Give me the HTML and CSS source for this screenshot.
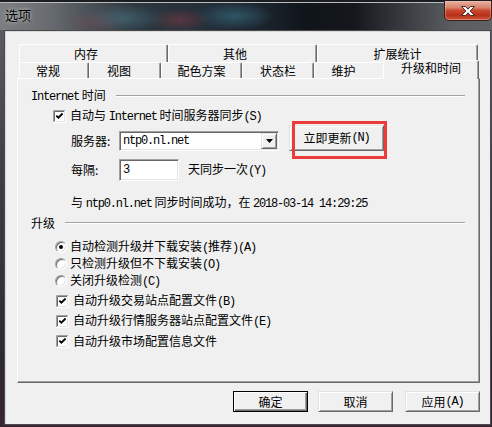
FILE: index.html
```html
<!DOCTYPE html>
<html lang="zh-CN">
<head>
<meta charset="utf-8">
<title>选项</title>
<link rel="stylesheet" href="styles.css">
</head>
<body>
<div class="window">
  <div class="titlebar">
    <span class="title">选项</span>
    <div class="close">
      <svg width="14" height="10" viewBox="0 0 14 10"><path d="M0.5 0.5H4.5L7 3.2L9.5 0.5H13.5L9.2 5L13.5 9.5H9.5L7 6.8L4.5 9.5H0.5L4.8 5Z" fill="#fff" stroke="#4a2a24" stroke-width="1"/></svg>
    </div>
  </div>
  <div class="client">
    <div class="tabs">
      <div class="tabrow row1">
        <div class="tab w149 off2">内存</div>
        <div class="tab w149 off2">其他</div>
        <div class="tab w161">扩展统计</div>
      </div>
      <div class="tabrow row2">
        <div class="tab w70 off">常规</div>
        <div class="tab w72 off">视图</div>
        <div class="tab w81">配色方案</div>
        <div class="tab w72">状态栏</div>
        <div class="tab w71 off">维护</div>
        <div class="tab sel">升级和时间</div>
      </div>
      <div class="panel">
        <div class="row grp m10">
          <span><span class="en">Internet</span> 时间</span><span class="gline"></span>
        </div>
        <div class="row m6 ind35">
          <svg class="chk" width="13" height="13" viewBox="0 0 13 13"><rect width="13" height="13" fill="#fff"/><path d="M0.5 12V0.5H12" stroke="#a0a0a0" fill="none"/><path d="M1.5 11V1.5H11" stroke="#696969" fill="none"/><path d="M0 12.5H12.5V0" stroke="#fff" fill="none"/><path d="M1 11.5H11.5V1" stroke="#e3e3e3" fill="none"/><polyline points="3.3,5.6 5.4,7.7 9.6,3.5" stroke="#000" stroke-width="1.8" fill="none"/></svg>
          <span class="lbl">自动与 <span class="en">Internet</span> 时间服务器同步<span class="en">(S)</span></span>
        </div>
        <div class="row srv m2 ind53">
          <span class="flabel">服务器:</span>
          <div class="field combo">
            <span class="ftext en">ntp0.nl.net</span>
            <span class="ddbtn"><svg width="7" height="4" viewBox="0 0 7 4"><path d="M0 0H7L3.5 4Z" fill="#000"/></svg></span>
          </div>
          <div class="btn upd">立即更新<span class="en">(N)</span><span class="mark"></span></div>
        </div>
        <div class="row every m8 ind53">
          <span class="flabel">每隔:</span>
          <div class="field edit"><span class="ftext en">3</span></div>
          <span class="after">天同步一次<span class="en">(Y)</span></span>
        </div>
        <div class="row m15 ind53">
          <span>与 <span class="en">ntp0.nl.net</span> 同步时间成功，在 <span class="en">2018-03-14 14:29:25</span></span>
        </div>
        <div class="row grp m6">
          <span>升级</span><span class="gline"></span>
        </div>
        <div class="row m10 ind37">
          <span class="radio"><span class="dot"></span></span>
          <span class="rlbl">自动检测升级并下载安装<span class="en">(</span>推荐<span class="en">)(A)</span></span>
        </div>
        <div class="row m3 ind37">
          <span class="radio"></span>
          <span class="rlbl">只检测升级但不下载安装<span class="en">(O)</span></span>
        </div>
        <div class="row m3 ind37">
          <span class="radio"></span>
          <span class="rlbl">关闭升级检测<span class="en">(C)</span></span>
        </div>
        <div class="row m6 ind38">
          <svg class="chk" width="13" height="13" viewBox="0 0 13 13"><rect width="13" height="13" fill="#fff"/><path d="M0.5 12V0.5H12" stroke="#a0a0a0" fill="none"/><path d="M1.5 11V1.5H11" stroke="#696969" fill="none"/><path d="M0 12.5H12.5V0" stroke="#fff" fill="none"/><path d="M1 11.5H11.5V1" stroke="#e3e3e3" fill="none"/><polyline points="3.3,5.6 5.4,7.7 9.6,3.5" stroke="#000" stroke-width="1.8" fill="none"/></svg>
          <span class="lbl">自动升级交易站点配置文件<span class="en">(B)</span></span>
        </div>
        <div class="row m6 ind38">
          <svg class="chk" width="13" height="13" viewBox="0 0 13 13"><rect width="13" height="13" fill="#fff"/><path d="M0.5 12V0.5H12" stroke="#a0a0a0" fill="none"/><path d="M1.5 11V1.5H11" stroke="#696969" fill="none"/><path d="M0 12.5H12.5V0" stroke="#fff" fill="none"/><path d="M1 11.5H11.5V1" stroke="#e3e3e3" fill="none"/><polyline points="3.3,5.6 5.4,7.7 9.6,3.5" stroke="#000" stroke-width="1.8" fill="none"/></svg>
          <span class="lbl">自动升级行情服务器站点配置文件<span class="en">(E)</span></span>
        </div>
        <div class="row m6 ind38">
          <svg class="chk" width="13" height="13" viewBox="0 0 13 13"><rect width="13" height="13" fill="#fff"/><path d="M0.5 12V0.5H12" stroke="#a0a0a0" fill="none"/><path d="M1.5 11V1.5H11" stroke="#696969" fill="none"/><path d="M0 12.5H12.5V0" stroke="#fff" fill="none"/><path d="M1 11.5H11.5V1" stroke="#e3e3e3" fill="none"/><polyline points="3.3,5.6 5.4,7.7 9.6,3.5" stroke="#000" stroke-width="1.8" fill="none"/></svg>
          <span class="lbl">自动升级市场配置信息文件</span>
        </div>
      </div>
    </div>
    <div class="buttons">
      <div class="btn def">确定</div>
      <div class="btn b2">取消</div>
      <div class="btn">应用<span class="en">(A)</span></div>
    </div>
  </div>
</div>
</body>
</html>
```
FILE: styles.css
```css
* { box-sizing: border-box; }
html, body { margin: 0; padding: 0; }
body {
  width: 492px;
  height: 427px;
  overflow: hidden;
  background: #2a2429;
  font-family: "Noto Sans CJK SC", sans-serif;
  font-size: 12px;
  color: #000;
}
.en {
  font-family: "Liberation Mono", "Noto Sans CJK SC", monospace;
  font-size: 12px;
  letter-spacing: -1.2px;
}
.window {
  width: 492px;
  height: 427px;
  display: flex;
  flex-direction: column;
  background: linear-gradient(180deg, #5f6367 0%, #3c4046 40%, #2e2832 85%, #3a2434 100%);
}
.titlebar {
  height: 30px;
  flex: none;
  display: flex;
  justify-content: space-between;
  align-items: flex-start;
  background:
    radial-gradient(ellipse 40px 14px at 125px 18px, rgba(70,120,135,0.55), transparent),
    radial-gradient(ellipse 30px 12px at 180px 20px, rgba(150,60,70,0.45), transparent),
    radial-gradient(ellipse 40px 14px at 235px 16px, rgba(60,130,150,0.5), transparent),
    radial-gradient(ellipse 30px 12px at 95px 22px, rgba(140,70,80,0.35), transparent),
    linear-gradient(90deg, #7b7f82 0%, #686c70 10%, #4a5157 18%, #2d363e 28%, #25303a 40%, #1d2630 52%, #10151a 62%, #14181c 72%, #3f4347 84%, #5a5e61 92%, #5e6265 100%);
  box-shadow: inset 0 2px #1b1d20, inset 0 3px #b9bdc0;
}
.title {
  padding-left: 5px;
  line-height: 30px;
  font-size: 13px;
  color: #000;
  text-shadow: 0 0 5px rgba(255,255,255,0.55), 0 0 2px rgba(255,255,255,0.4);
}
.close {
  width: 48px;
  height: 20px;
  margin-top: 1px;
  border: 1px solid #3b1f1a;
  border-top: none;
  border-radius: 0 0 5px 5px;
  background: linear-gradient(180deg, #e6b0a2 0%, #d9836c 35%, #c9482e 50%, #b93019 75%, #c85a3e 100%);
  box-shadow: inset 0 0 0 1px rgba(255,210,200,0.35);
  display: flex;
  align-items: center;
  justify-content: center;
}
.client {
  margin-left: 4px;
  width: 487px;
  height: 395px;
  flex: none;
  background: #f0f0f0;
  border: 1px solid #4a4a4a;
  box-shadow: inset 1px 1px #d8d8d8;
  padding: 13px 10px 0 12px;
  display: flex;
  flex-direction: column;
}
.tabs {
  width: 463px;
  display: flex;
  flex-direction: column;
}
.tabrow {
  display: flex;
  align-items: flex-start;
  padding-left: 2px;
}
.row1 { height: 18px; }
.row2 { height: 16px; }
.tab {
  flex: none;
  height: 100%;
  background: #f0f0f0;
  border-left: 1px solid #fff;
  border-top: 1px solid #fff;
  border-right: 1px solid #696969;
  box-shadow: inset -1px 0 #a0a0a0;
  border-radius: 2px 2px 0 0;
  text-align: center;
  white-space: nowrap;
}
.row1 .tab { line-height: 17px; }
.row2 .tab { line-height: 15px; }
.w149 { width: 149px; }
.w161 { width: 161px; }
.w70 { width: 70px; }
.w72 { width: 72px; }
.w81 { width: 81px; }
.w71 { width: 71px; }
.off { padding-right: 12px; }
.off2 { padding-right: 15px; }
.tab.sel {
  width: 96px;
  height: 19px;
  margin-left: -2px;
  margin-top: -2px;
  line-height: 14px;
  position: relative;
  z-index: 1;
}
.panel {
  height: 305px;
  border-top: 1px solid #fff;
  border-left: 1px solid #fff;
  border-right: 1px solid #696969;
  border-bottom: 1px solid #696969;
  box-shadow: inset -1px -1px #a0a0a0;
  display: flex;
  flex-direction: column;
}
.row {
  display: flex;
  align-items: center;
  height: 14px;
  line-height: 14px;
  white-space: nowrap;
}
.grp { padding-left: 13px; padding-right: 14px; }
.gline {
  flex: 1;
  height: 2px;
  margin-left: 10px;
  border-top: 1px solid #a0a0a0;
  border-bottom: 1px solid #fff;
}
.m2 { margin-top: 2px; }
.m3 { margin-top: 3px; }
.m6 { margin-top: 6px; }
.m8 { margin-top: 8px; }
.m10 { margin-top: 10px; }
.m15 { margin-top: 15px; }
.ind35 { padding-left: 35px; }
.ind37 { padding-left: 37px; }
.ind38 { padding-left: 38px; }
.ind53 { padding-left: 53px; }
.chk { flex: none; display: block; }
.lbl { margin-left: 4px; }
.rlbl { margin-left: 3px; }
.radio {
  flex: none;
  width: 12px;
  height: 12px;
  border-radius: 50%;
  background: #fff;
  border: 1px solid;
  border-color: #a0a0a0 #fff #fff #a0a0a0;
  box-shadow: inset 1px 1px #696969, inset -1px -1px #e3e3e3;
  display: flex;
  align-items: center;
  justify-content: center;
}
.dot {
  width: 4px;
  height: 4px;
  border-radius: 50%;
  background: #000;
}
.srv {
  height: 26px;
  align-items: flex-end;
}
.flabel {
  width: 48px;
  flex: none;
  line-height: 20px;
}
.field {
  background: #fff;
  border: 1px solid;
  border-color: #a0a0a0 #fff #fff #a0a0a0;
  box-shadow: inset 1px 1px #696969, inset -1px -1px #e3e3e3;
  display: flex;
  align-items: center;
  flex: none;
}
.combo {
  width: 160px;
  height: 20px;
  padding: 1px;
}
.ftext {
  flex: 1;
  padding-left: 2px;
  line-height: 16px;
}
.ddbtn {
  width: 16px;
  height: 16px;
  flex: none;
  background: #f0f0f0;
  border: 1px solid;
  border-color: #e3e3e3 #696969 #696969 #e3e3e3;
  box-shadow: inset 1px 1px #fff, inset -1px -1px #a0a0a0;
  display: flex;
  align-items: center;
  justify-content: center;
}
.ddbtn svg { display: block; }
.every { height: 22px; }
.edit {
  width: 60px;
  height: 22px;
  padding: 1px;
}
.after { margin-left: 9px; }
.btn {
  flex: none;
  width: 75px;
  height: 21px;
  background: #f0f0f0;
  border: 1px solid;
  border-color: #e3e3e3 #696969 #696969 #e3e3e3;
  box-shadow: inset 1px 1px #fff, inset -1px -1px #a0a0a0;
  display: flex;
  align-items: center;
  justify-content: center;
  line-height: 14px;
  white-space: nowrap;
}
.btn.def {
  border: 1px solid #000;
  box-shadow: inset 1px 1px #fff, inset -1px -1px #696969, inset -2px -2px #a0a0a0;
}
.btn.upd {
  width: 95px;
  height: 26px;
  margin-left: 10px;
  position: relative;
}
.mark {
  position: absolute;
  left: 2px;
  top: -5px;
  width: 95px;
  height: 38px;
  border: 3px solid #ee3a3a;
}
.buttons {
  margin-top: 8px;
  display: flex;
  justify-content: flex-end;
}
.btn.def { margin-right: 10px; }
.btn.b2 { margin-right: 12px; }
```
